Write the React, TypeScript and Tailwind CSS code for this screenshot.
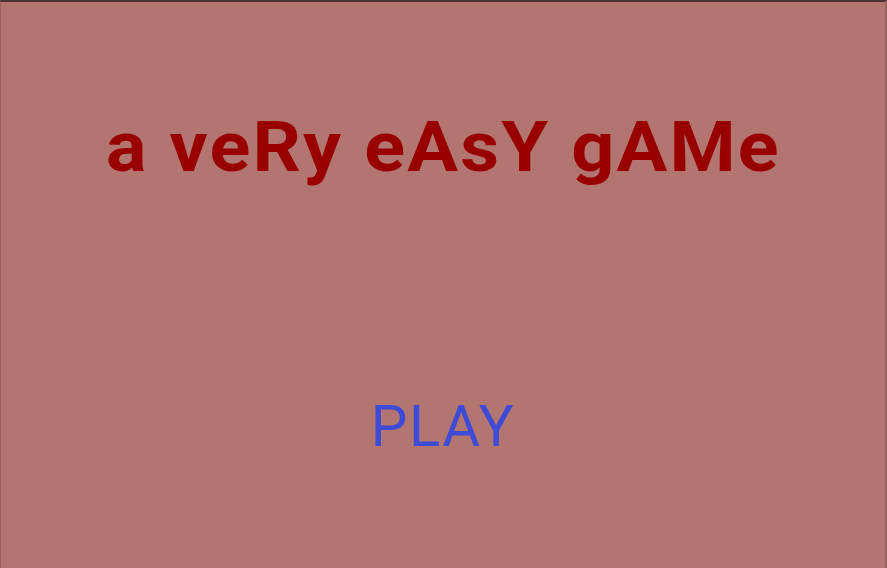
export default function App() {
  return (
    <div className="flex h-[568px] w-[887px] flex-col items-center border-t-2 border-l border-r-2 border-t-[#4a3232] border-l-[#a0625d] border-r-[#9c625c] bg-[#b3756f] font-['Roboto',sans-serif]">
      <h1 className="mt-[100px] scale-x-[1.08] text-[70px] leading-[90px] font-bold tracking-[2px] text-[#990000]">
        a veRy eAsY gAMe
      </h1>
      <button className="mt-[199px] text-[58px] leading-[70px] font-normal tracking-[1.5px] text-[#3d4bd6]">
        PLAY
      </button>
    </div>
  );
}
